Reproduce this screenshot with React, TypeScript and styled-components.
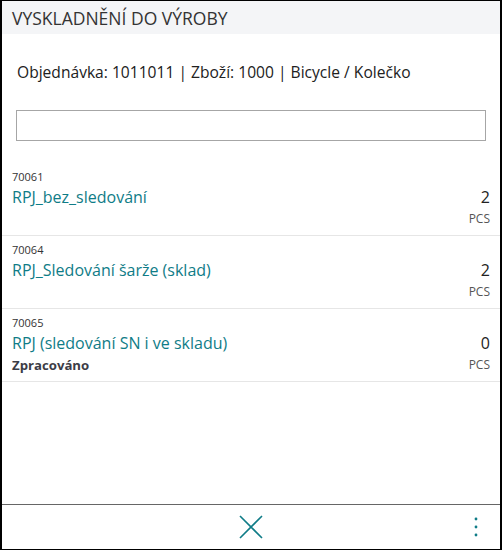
import React from "react";
import styled, { createGlobalStyle } from "styled-components";

const Global = createGlobalStyle`
  html, body { margin: 0; padding: 0; background: #fff; }
  body { font-family: "Open Sans", "Noto Sans", sans-serif; }
  * { box-sizing: border-box; }
`;

const Frame = styled.div`
  width: 502px;
  height: 550px;
  border-style: solid;
  border-color: #000;
  border-width: 1px 2px 1px 2px;
  display: flex;
  flex-direction: column;
  background: #fff;
`;

const Header = styled.div`
  height: 33px;
  background: #f4f5f7;
  display: flex;
  align-items: center;
  padding-left: 10px;
  font-size: 17.5px;
  color: #333;
`;

const Info = styled.div`
  padding: 27px 0 0 15px;
  height: 76px;
  font-size: 15.6px;
  color: #212121;
`;

const SearchBox = styled.input`
  display: block;
  margin: 0 14px 0 14px;
  width: 470px;
  height: 31px;
  border: 1px solid #a6a6a6;
  outline: none;
  font-size: 14px;
`;

const List = styled.div`
  flex: 1;
  margin-top: 22px;
`;

const Row = styled.div`
  display: flex;
  justify-content: space-between;
  padding: 6px 10px 0 10px;
  height: 73px;
  border-bottom: 1px solid #e6e6e6;
`;

const Left = styled.div`
  display: flex;
  flex-direction: column;
`;

const Right = styled.div`
  display: flex;
  flex-direction: column;
  align-items: flex-end;
  padding-top: 16px;
`;

const Code = styled.div`
  font-size: 11px;
  line-height: 16px;
  color: #333;
`;

const Name = styled.div`
  font-size: 16px;
  line-height: 24px;
  color: #0f7c87;
`;

const Status = styled.div`
  font-size: 13.2px;
  line-height: 20px;
  font-weight: 700;
  color: #3c3c46;
`;

const Qty = styled.div`
  font-size: 16px;
  line-height: 24px;
  color: #222;
`;

const Unit = styled.div`
  font-size: 12px;
  line-height: 20px;
  color: #555;
`;

const Footer = styled.div`
  height: 45px;
  border-top: 1px solid #666;
  display: grid;
  grid-template-columns: 1fr auto 1fr;
  align-items: center;
`;

const IconButton = styled.button<{ $end?: boolean }>`
  background: none;
  border: none;
  padding: 0;
  display: flex;
  justify-self: ${(p) => (p.$end ? "end" : "center")};
  margin-right: ${(p) => (p.$end ? "21px" : "0")};
  cursor: pointer;
`;

const items = [
  { code: "70061", name: "RPJ_bez_sledování", qty: "2", unit: "PCS" },
  { code: "70064", name: "RPJ_Sledování šarže (sklad)", qty: "2", unit: "PCS" },
  { code: "70065", name: "RPJ (sledování SN i ve skladu)", qty: "0", unit: "PCS", status: "Zpracováno" },
];

export default function App() {
  return (
    <>
      <Global />
      <Frame>
        <Header>VYSKLADNĚNÍ DO VÝROBY</Header>
        <Info>Objednávka: 1011011 | Zboží: 1000 | Bicycle / Kolečko</Info>
        <SearchBox />
        <List>
          {items.map((it) => (
            <Row key={it.code}>
              <Left>
                <Code>{it.code}</Code>
                <Name>{it.name}</Name>
                {it.status && <Status>{it.status}</Status>}
              </Left>
              <Right>
                <Qty>{it.qty}</Qty>
                <Unit>{it.unit}</Unit>
              </Right>
            </Row>
          ))}
        </List>
        <Footer>
          <span />
          <IconButton aria-label="close">
            <svg width="24" height="24" viewBox="0 0 24 24">
              <path d="M1 1 L23 23 M23 1 L1 23" stroke="#0f7c87" strokeWidth="1.6" fill="none" />
            </svg>
          </IconButton>
          <IconButton aria-label="more" $end>
            <svg width="6" height="22" viewBox="0 0 6 22">
              <circle cx="3" cy="3" r="1.4" fill="#0f7c87" />
              <circle cx="3" cy="11" r="1.4" fill="#0f7c87" />
              <circle cx="3" cy="19" r="1.4" fill="#0f7c87" />
            </svg>
          </IconButton>
        </Footer>
      </Frame>
    </>
  );
}
